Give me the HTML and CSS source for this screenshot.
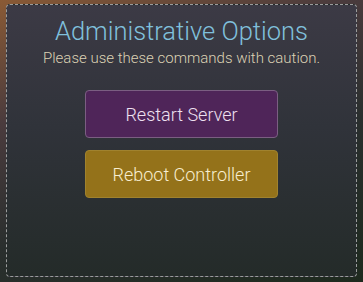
FILE: index.html
```html
<!DOCTYPE html>
<html>
<head>
<meta charset="utf-8">
<link rel="stylesheet" href="styles.css">
</head>
<body>
<div class="page">
  <section class="card">
    <h1 class="title">Administrative Options</h1>
    <p class="subtitle">Please use these commands with caution.</p>
    <div class="actions">
      <button class="btn btn-restart">Restart Server</button>
      <button class="btn btn-reboot">Reboot Controller</button>
    </div>
  </section>
</div>
</body>
</html>
```
FILE: styles.css
```css
html, body {
  margin: 0;
  padding: 0;
}
body {
  width: 363px;
  height: 282px;
  overflow: hidden;
  font-family: Roboto, "Liberation Sans", sans-serif;
}
.page {
  box-sizing: border-box;
  width: 363px;
  height: 282px;
  padding: 4px 6px 5px 6px;
  background: linear-gradient(160deg, #8a5a35 0%, #4a3b3d 30%, #2a2f2e 60%, #1e2a1e 100%);
}
.card {
  box-sizing: border-box;
  height: 100%;
  border: 1px dashed #9a9c9c;
  border-radius: 4px;
  background: linear-gradient(180deg, #3c3a45 0%, #30333a 45%, #242b29 100%);
  display: flex;
  flex-direction: column;
  align-items: center;
  padding-top: 10px;
}
.title {
  margin: 0;
  font-weight: 300;
  font-size: 25.5px;
  line-height: 32px;
  color: #80c0dc;
}
.subtitle {
  margin: 2px 0 0 0;
  font-weight: 300;
  font-size: 15px;
  line-height: 18px;
  color: #dcd2b4;
}
.actions {
  margin-top: 23px;
  display: flex;
  flex-direction: column;
  gap: 12px;
}
.btn {
  box-sizing: border-box;
  width: 193px;
  height: 48px;
  border-radius: 4px;
  font-family: Roboto, "Liberation Sans", sans-serif;
  font-weight: 300;
  font-size: 18px;
  cursor: pointer;
}
.btn-restart {
  background: #4f2559;
  border: 1px solid #7b5e82;
  color: #eee0f0;
}
.btn-reboot {
  background: #94721a;
  border: 1px solid #a0822e;
  color: #f8eed0;
}
```
